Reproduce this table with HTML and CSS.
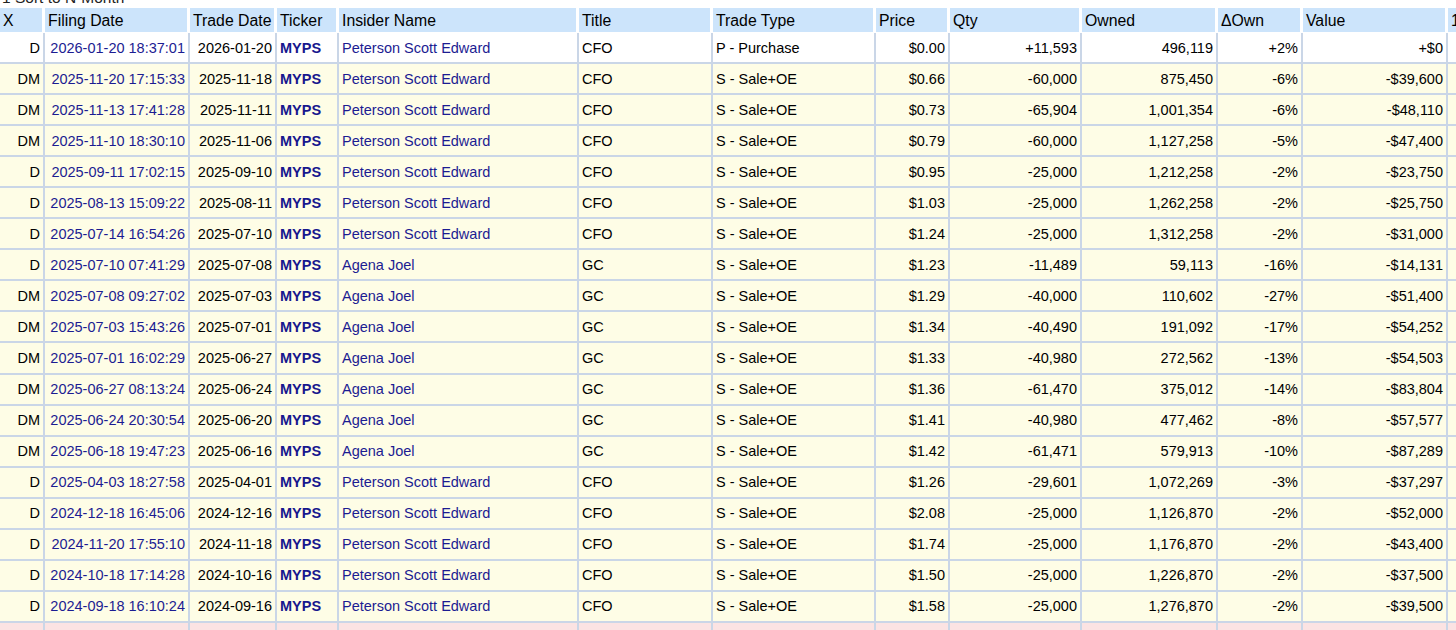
FILE: index.html
```html
<!DOCTYPE html>
<html>
<head>
<meta charset="utf-8">
<link rel="stylesheet" href="styles.css">
</head>
<body>
<div class="caption"><span>1 Sort to N-Month</span></div>
<table class="grid">
<colgroup>
<col class="c-x"><col class="c-fd"><col class="c-td"><col class="c-tk"><col class="c-in"><col class="c-ti"><col class="c-tt"><col class="c-pr"><col class="c-qt"><col class="c-ow"><col class="c-do"><col class="c-va"><col class="c-1d">
</colgroup>
<thead>
<tr><th>X</th><th>Filing Date</th><th>Trade Date</th><th>Ticker</th><th>Insider Name</th><th>Title</th><th>Trade Type</th><th>Price</th><th>Qty</th><th>Owned</th><th>ΔOwn</th><th>Value</th><th>1d</th></tr>
</thead>
<tbody>
<tr class="buy"><td class="r">D</td><td class="lnk r">2026-01-20 18:37:01</td><td class="r">2026-01-20</td><td class="tk">MYPS</td><td class="lnk">Peterson Scott Edward</td><td>CFO</td><td>P - Purchase</td><td class="r">$0.00</td><td class="r">+11,593</td><td class="r">496,119</td><td class="r">+2%</td><td class="r">+$0</td><td></td></tr>
<tr><td class="r">DM</td><td class="lnk r">2025-11-20 17:15:33</td><td class="r">2025-11-18</td><td class="tk">MYPS</td><td class="lnk">Peterson Scott Edward</td><td>CFO</td><td>S - Sale+OE</td><td class="r">$0.66</td><td class="r">-60,000</td><td class="r">875,450</td><td class="r">-6%</td><td class="r">-$39,600</td><td></td></tr>
<tr><td class="r">DM</td><td class="lnk r">2025-11-13 17:41:28</td><td class="r">2025-11-11</td><td class="tk">MYPS</td><td class="lnk">Peterson Scott Edward</td><td>CFO</td><td>S - Sale+OE</td><td class="r">$0.73</td><td class="r">-65,904</td><td class="r">1,001,354</td><td class="r">-6%</td><td class="r">-$48,110</td><td></td></tr>
<tr><td class="r">DM</td><td class="lnk r">2025-11-10 18:30:10</td><td class="r">2025-11-06</td><td class="tk">MYPS</td><td class="lnk">Peterson Scott Edward</td><td>CFO</td><td>S - Sale+OE</td><td class="r">$0.79</td><td class="r">-60,000</td><td class="r">1,127,258</td><td class="r">-5%</td><td class="r">-$47,400</td><td></td></tr>
<tr><td class="r">D</td><td class="lnk r">2025-09-11 17:02:15</td><td class="r">2025-09-10</td><td class="tk">MYPS</td><td class="lnk">Peterson Scott Edward</td><td>CFO</td><td>S - Sale+OE</td><td class="r">$0.95</td><td class="r">-25,000</td><td class="r">1,212,258</td><td class="r">-2%</td><td class="r">-$23,750</td><td></td></tr>
<tr><td class="r">D</td><td class="lnk r">2025-08-13 15:09:22</td><td class="r">2025-08-11</td><td class="tk">MYPS</td><td class="lnk">Peterson Scott Edward</td><td>CFO</td><td>S - Sale+OE</td><td class="r">$1.03</td><td class="r">-25,000</td><td class="r">1,262,258</td><td class="r">-2%</td><td class="r">-$25,750</td><td></td></tr>
<tr><td class="r">D</td><td class="lnk r">2025-07-14 16:54:26</td><td class="r">2025-07-10</td><td class="tk">MYPS</td><td class="lnk">Peterson Scott Edward</td><td>CFO</td><td>S - Sale+OE</td><td class="r">$1.24</td><td class="r">-25,000</td><td class="r">1,312,258</td><td class="r">-2%</td><td class="r">-$31,000</td><td></td></tr>
<tr><td class="r">D</td><td class="lnk r">2025-07-10 07:41:29</td><td class="r">2025-07-08</td><td class="tk">MYPS</td><td class="lnk">Agena Joel</td><td>GC</td><td>S - Sale+OE</td><td class="r">$1.23</td><td class="r">-11,489</td><td class="r">59,113</td><td class="r">-16%</td><td class="r">-$14,131</td><td></td></tr>
<tr><td class="r">DM</td><td class="lnk r">2025-07-08 09:27:02</td><td class="r">2025-07-03</td><td class="tk">MYPS</td><td class="lnk">Agena Joel</td><td>GC</td><td>S - Sale+OE</td><td class="r">$1.29</td><td class="r">-40,000</td><td class="r">110,602</td><td class="r">-27%</td><td class="r">-$51,400</td><td></td></tr>
<tr><td class="r">DM</td><td class="lnk r">2025-07-03 15:43:26</td><td class="r">2025-07-01</td><td class="tk">MYPS</td><td class="lnk">Agena Joel</td><td>GC</td><td>S - Sale+OE</td><td class="r">$1.34</td><td class="r">-40,490</td><td class="r">191,092</td><td class="r">-17%</td><td class="r">-$54,252</td><td></td></tr>
<tr><td class="r">DM</td><td class="lnk r">2025-07-01 16:02:29</td><td class="r">2025-06-27</td><td class="tk">MYPS</td><td class="lnk">Agena Joel</td><td>GC</td><td>S - Sale+OE</td><td class="r">$1.33</td><td class="r">-40,980</td><td class="r">272,562</td><td class="r">-13%</td><td class="r">-$54,503</td><td></td></tr>
<tr><td class="r">DM</td><td class="lnk r">2025-06-27 08:13:24</td><td class="r">2025-06-24</td><td class="tk">MYPS</td><td class="lnk">Agena Joel</td><td>GC</td><td>S - Sale+OE</td><td class="r">$1.36</td><td class="r">-61,470</td><td class="r">375,012</td><td class="r">-14%</td><td class="r">-$83,804</td><td></td></tr>
<tr><td class="r">DM</td><td class="lnk r">2025-06-24 20:30:54</td><td class="r">2025-06-20</td><td class="tk">MYPS</td><td class="lnk">Agena Joel</td><td>GC</td><td>S - Sale+OE</td><td class="r">$1.41</td><td class="r">-40,980</td><td class="r">477,462</td><td class="r">-8%</td><td class="r">-$57,577</td><td></td></tr>
<tr><td class="r">DM</td><td class="lnk r">2025-06-18 19:47:23</td><td class="r">2025-06-16</td><td class="tk">MYPS</td><td class="lnk">Agena Joel</td><td>GC</td><td>S - Sale+OE</td><td class="r">$1.42</td><td class="r">-61,471</td><td class="r">579,913</td><td class="r">-10%</td><td class="r">-$87,289</td><td></td></tr>
<tr><td class="r">D</td><td class="lnk r">2025-04-03 18:27:58</td><td class="r">2025-04-01</td><td class="tk">MYPS</td><td class="lnk">Peterson Scott Edward</td><td>CFO</td><td>S - Sale+OE</td><td class="r">$1.26</td><td class="r">-29,601</td><td class="r">1,072,269</td><td class="r">-3%</td><td class="r">-$37,297</td><td></td></tr>
<tr><td class="r">D</td><td class="lnk r">2024-12-18 16:45:06</td><td class="r">2024-12-16</td><td class="tk">MYPS</td><td class="lnk">Peterson Scott Edward</td><td>CFO</td><td>S - Sale+OE</td><td class="r">$2.08</td><td class="r">-25,000</td><td class="r">1,126,870</td><td class="r">-2%</td><td class="r">-$52,000</td><td></td></tr>
<tr><td class="r">D</td><td class="lnk r">2024-11-20 17:55:10</td><td class="r">2024-11-18</td><td class="tk">MYPS</td><td class="lnk">Peterson Scott Edward</td><td>CFO</td><td>S - Sale+OE</td><td class="r">$1.74</td><td class="r">-25,000</td><td class="r">1,176,870</td><td class="r">-2%</td><td class="r">-$43,400</td><td></td></tr>
<tr><td class="r">D</td><td class="lnk r">2024-10-18 17:14:28</td><td class="r">2024-10-16</td><td class="tk">MYPS</td><td class="lnk">Peterson Scott Edward</td><td>CFO</td><td>S - Sale+OE</td><td class="r">$1.50</td><td class="r">-25,000</td><td class="r">1,226,870</td><td class="r">-2%</td><td class="r">-$37,500</td><td></td></tr>
<tr><td class="r">D</td><td class="lnk r">2024-09-18 16:10:24</td><td class="r">2024-09-16</td><td class="tk">MYPS</td><td class="lnk">Peterson Scott Edward</td><td>CFO</td><td>S - Sale+OE</td><td class="r">$1.58</td><td class="r">-25,000</td><td class="r">1,276,870</td><td class="r">-2%</td><td class="r">-$39,500</td><td></td></tr>
<tr class="pink"><td class="r">D</td><td class="lnk r">2024-08-20 16:05:11</td><td class="r">2024-08-16</td><td class="tk">MYPS</td><td class="lnk">Peterson Scott Edward</td><td>CFO</td><td>S - Sale+OE</td><td class="r">$1.60</td><td class="r">-25,000</td><td class="r">1,301,870</td><td class="r">-2%</td><td class="r">-$40,000</td><td></td></tr>
</tbody>
</table>
</body>
</html>
```

FILE: styles.css
```css
html, body {
  margin: 0;
  padding: 0;
  background: #ffffff;
  overflow: hidden;
}
body {
  font-family: "Liberation Sans", Arial, Helvetica, sans-serif;
  font-size: 14.5px;
  color: #000;
  width: 1456px;
  height: 630px;
}
.caption {
  height: 8px;
  overflow: hidden;
  display: flex;
  align-items: flex-end;
  font-size: 15.5px;
  line-height: 16px;
  color: #222;
  padding-left: 2px;
}
.caption span {
  margin-bottom: 2px;
}
.grid {
  border-collapse: separate;
  border-spacing: 0;
  table-layout: fixed;
  width: 1500px;
}
.c-x { width: 45px; }
.c-fd { width: 145px; }
.c-td { width: 87px; }
.c-tk { width: 62px; }
.c-in { width: 240px; }
.c-ti { width: 134px; }
.c-tt { width: 163px; }
.c-pr { width: 74px; }
.c-qt { width: 132px; }
.c-ow { width: 136px; }
.c-do { width: 85px; }
.c-va { width: 145px; }
.c-1d { width: 52px; }

.grid th {
  background: #cce4fb;
  font-weight: normal;
  text-align: left;
  height: 22px;
  padding: 2px 3px 0 3px;
  border-right: 3px solid #ffffff;
  border-bottom: 1px solid #ffffff;
  white-space: nowrap;
  overflow: hidden;
  font-size: 15.8px;
  line-height: 20px;
}
.grid td {
  height: 29.06px;
  padding: 0 3px 0 3px;
  background: #fefde6;
  border-right: 2px solid #cad6e7;
  border-bottom: 2px solid #cad6e7;
  white-space: nowrap;
  overflow: hidden;
}
.grid tr.buy td { background: #ffffff; }
.grid tr.pink td { background: #fbe3e3; }
.grid td.r { text-align: right; }
.grid td.lnk { color: #1c1c92; }
.grid td.tk { color: #17178e; font-weight: bold; }
```
